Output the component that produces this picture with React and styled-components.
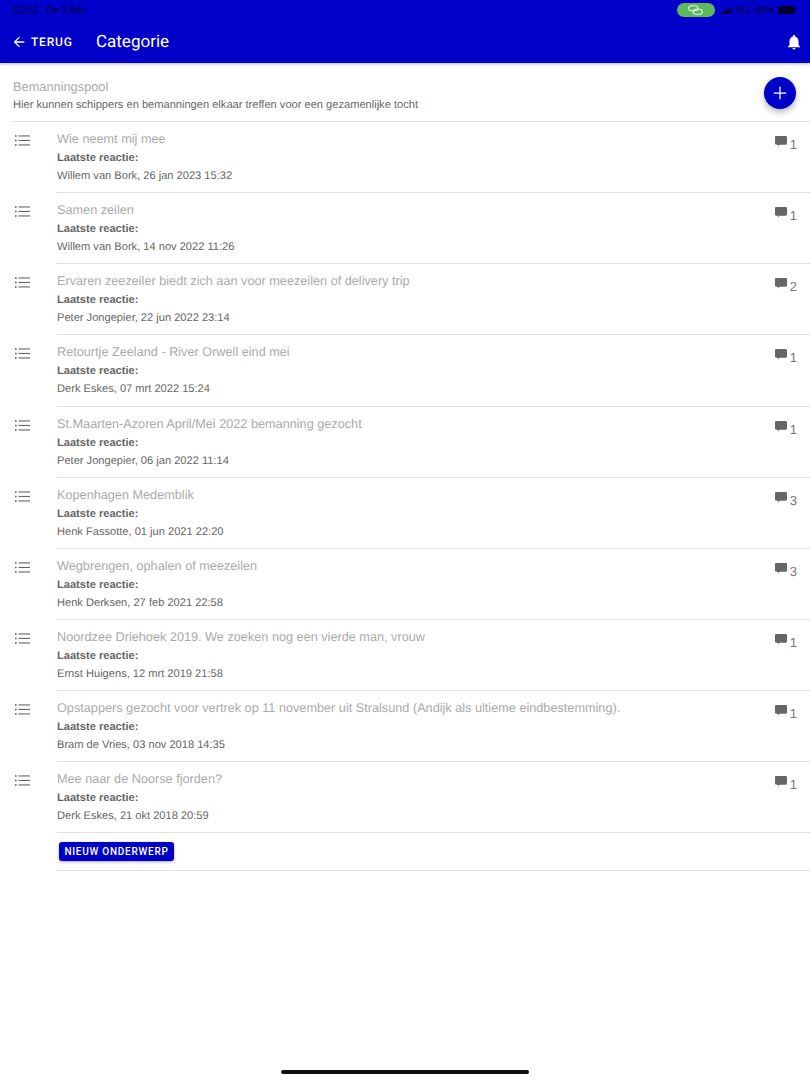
import React from "react";
import styled, { createGlobalStyle } from "styled-components";
import { MdArrowBack, MdNotifications } from "react-icons/md";
import { Plus } from "lucide-react";

const GlobalStyle = createGlobalStyle`
  html, body {
    margin: 0;
    padding: 0;
    background: #fff;
    font-family: "Liberation Sans", Arial, sans-serif;
    text-rendering: geometricPrecision;
  }
`;

const Page = styled.div`
  position: relative;
  width: 810px;
  height: 1080px;
  overflow: hidden;
  background: #fff;
`;

const Header = styled.header`
  height: 63px;
  background: #0000c8;
  box-shadow: 0 1px 3px rgba(0, 0, 0, 0.3);
  display: flex;
  flex-direction: column;
`;

const StatusBar = styled.div`
  height: 20px;
  padding: 0 13px;
  display: flex;
  align-items: center;
  justify-content: space-between;
  font-size: 10px;
  color: #000030;
`;

const StatusRight = styled.div`
  display: flex;
  align-items: center;
`;

const LinkPill = styled.div`
  width: 38px;
  height: 14px;
  margin-right: 6px;
  border-radius: 7px;
  background: #5cb85c;
  display: flex;
  align-items: center;
  justify-content: center;
`;

const StatusText = styled.span`
  margin: 0 3px 0 4px;
  word-spacing: 2px;
`;

const Toolbar = styled.div`
  flex: 1;
  padding: 0 7px 0 11px;
  display: flex;
  align-items: center;
  color: #fff;
`;

const BackLabel = styled.span`
  margin-left: 4px;
  width: 65px;
  font-size: 12px;
  font-weight: 500;
  letter-spacing: 0.8px;
  font-family: Roboto, "Liberation Sans", sans-serif;
`;

const Title = styled.h1`
  flex: 1;
  margin: 0;
  font-size: 17px;
  font-weight: 400;
  font-family: Roboto, "Liberation Sans", sans-serif;
`;

const Intro = styled.section`
  position: relative;
  margin-left: 13px;
  height: 59px;
  border-bottom: 1px solid #e0e0e0;
  padding-top: 15px;
  box-sizing: border-box;
`;

const IntroTitle = styled.div`
  font-size: 12.8px;
  line-height: 17px;
  color: #aaa;
`;

const IntroText = styled.div`
  margin-top: 2px;
  font-size: 11.1px;
  line-height: 17px;
  color: #666;
`;

const Fab = styled.button`
  position: absolute;
  top: 14px;
  right: 14px;
  width: 32px;
  height: 32px;
  padding: 0;
  border: none;
  border-radius: 50%;
  background: #0000c8;
  color: #fff;
  display: flex;
  align-items: center;
  justify-content: center;
  box-shadow: 0 3px 6px rgba(0, 0, 0, 0.3);
`;

const Row = styled.div`
  display: flex;
  height: 71.13px;
`;

const RowIcon = styled.div`
  width: 57px;
  flex-shrink: 0;
  padding: 13px 0 0 15px;
  box-sizing: border-box;
  color: #666;
  line-height: 0;
`;

const RowBody = styled.div`
  flex: 1;
  display: flex;
  justify-content: space-between;
  border-bottom: 1px solid #e0e0e0;
  padding: 9px 13px 0 0;
`;

const RowTitle = styled.div`
  font-size: 12.7px;
  line-height: 17px;
  color: #aaa;
`;

const RowLabel = styled.div`
  margin-top: 3px;
  font-size: 11.1px;
  line-height: 14px;
  font-weight: 700;
  color: #666;
`;

const RowMeta = styled.div`
  margin-top: 4px;
  font-size: 11.1px;
  line-height: 14px;
  color: #666;
`;

const CommentCount = styled.div`
  display: flex;
  align-items: flex-start;
  gap: 3px;
  margin-top: 5px;
  font-size: 13px;
  line-height: 15px;
  color: #777;
`;

const CountValue = styled.span`
  margin-top: 1px;
`;

const CommentIcon = styled.svg`
  display: block;
  color: #666;
`;

const ButtonRow = styled.div`
  margin-left: 57px;
  height: 38px;
  border-bottom: 1px solid #e0e0e0;
  padding: 9px 0 0 2px;
  box-sizing: border-box;
`;

const NewButton = styled.button`
  display: block;
  width: 115px;
  height: 19px;
  padding: 0;
  border: none;
  border-radius: 3px;
  background: #0000c8;
  color: #fff;
  font-family: Roboto, "Liberation Sans", sans-serif;
  font-size: 10px;
  font-weight: 500;
  letter-spacing: 0.75px;
  box-shadow: 0 1px 3px rgba(0, 0, 0, 0.35);
`;

const HomeBar = styled.div`
  position: absolute;
  left: 281px;
  bottom: 6px;
  width: 248px;
  height: 4px;
  border-radius: 2px;
  background: #111;
`;

const StatusSvg = styled.svg`
  display: block;
`;

const topics = [
  ["Wie neemt mij mee", "Willem van Bork, 26 jan 2023 15:32", 1],
  ["Samen zeilen", "Willem van Bork, 14 nov 2022 11:26", 1],
  ["Ervaren zeezeiler biedt zich aan voor meezeilen of delivery trip", "Peter Jongepier, 22 jun 2022 23:14", 2],
  ["Retourtje Zeeland - River Orwell eind mei", "Derk Eskes, 07 mrt 2022 15:24", 1],
  ["St.Maarten-Azoren April/Mei 2022 bemanning gezocht", "Peter Jongepier, 06 jan 2022 11:14", 1],
  ["Kopenhagen Medemblik", "Henk Fassotte, 01 jun 2021 22:20", 3],
  ["Wegbrengen, ophalen of meezeilen", "Henk Derksen, 27 feb 2021 22:58", 3],
  ["Noordzee Driehoek 2019. We zoeken nog een vierde man, vrouw", "Ernst Huigens, 12 mrt 2019 21:58", 1],
  ["Opstappers gezocht voor vertrek op 11 november uit Stralsund (Andijk als ultieme eindbestemming).", "Bram de Vries, 03 nov 2018 14:35", 1],
  ["Mee naar de Noorse fjorden?", "Derk Eskes, 21 okt 2018 20:59", 1],
];

const ListGlyph = () => (
  <svg width="15" height="11" viewBox="0 0 15 11" fill="currentColor">
    <circle cx="0.8" cy="1" r="0.9" />
    <circle cx="0.8" cy="5.5" r="0.9" />
    <circle cx="0.8" cy="10" r="0.9" />
    <rect x="3.5" y="0.4" width="11.5" height="1.1" />
    <rect x="3.5" y="4.9" width="11.5" height="1.1" />
    <rect x="3.5" y="9.4" width="11.5" height="1.1" />
  </svg>
);

const App = () => {
  return (
    <Page>
      <GlobalStyle />
      <Header>
        <StatusBar>
          <span>13:02&nbsp;&nbsp;&nbsp;Do 2 feb.</span>
          <StatusRight>
            <LinkPill>
              <StatusSvg width="15" height="10" viewBox="0 0 15 10" fill="none" stroke="#e8f5e8" strokeWidth="1.1">
                <rect x="0.8" y="0.8" width="9" height="5" rx="2.5" />
                <rect x="5.2" y="4.2" width="9" height="5" rx="2.5" />
              </StatusSvg>
            </LinkPill>
            <StatusSvg width="12" height="7" viewBox="0 0 12 7">
              <rect x="0" y="4.5" width="2.4" height="2.5" fill="#000030" />
              <rect x="3.2" y="3" width="2.4" height="4" fill="#000030" />
              <rect x="6.4" y="1.5" width="2.4" height="5.5" fill="#000030" />
              <rect x="9.6" y="0" width="2.4" height="7" fill="#000078" />
            </StatusSvg>
            <StatusText>5G 98%</StatusText>
            <StatusSvg width="19" height="8" viewBox="0 0 19 8">
              <rect x="0" y="0" width="17" height="8" rx="2.5" fill="#000030" />
              <rect x="17.5" y="2.5" width="1.5" height="3" rx="0.7" fill="#000078" />
            </StatusSvg>
          </StatusRight>
        </StatusBar>
        <Toolbar>
          <MdArrowBack size={16} />
          <BackLabel>TERUG</BackLabel>
          <Title>Categorie</Title>
          <MdNotifications size={18} />
        </Toolbar>
      </Header>
      <Intro>
        <IntroTitle>Bemanningspool</IntroTitle>
        <IntroText>Hier kunnen schippers en bemanningen elkaar treffen voor een gezamenlijke tocht</IntroText>
        <Fab>
          <Plus size={20} strokeWidth={1.5} />
        </Fab>
      </Intro>
      {topics.map(([title, meta, count]) => (
        <Row key={title}>
          <RowIcon>
            <ListGlyph />
          </RowIcon>
          <RowBody>
            <div>
              <RowTitle>{title}</RowTitle>
              <RowLabel>Laatste reactie:</RowLabel>
              <RowMeta>{meta}</RowMeta>
            </div>
            <CommentCount>
              <CommentIcon width="12" height="11" viewBox="0 0 12 11" fill="currentColor">
                <path d="M1.2 0h9.6C11.5 0 12 .5 12 1.2v6.4c0 .7-.5 1.2-1.2 1.2H4.6L3 10.6V8.8H1.2C.5 8.8 0 8.3 0 7.6V1.2C0 .5.5 0 1.2 0z" />
              </CommentIcon>
              <CountValue>{count}</CountValue>
            </CommentCount>
          </RowBody>
        </Row>
      ))}
      <ButtonRow>
        <NewButton>NIEUW ONDERWERP</NewButton>
      </ButtonRow>
      <HomeBar />
    </Page>
  );
};

export default App;
